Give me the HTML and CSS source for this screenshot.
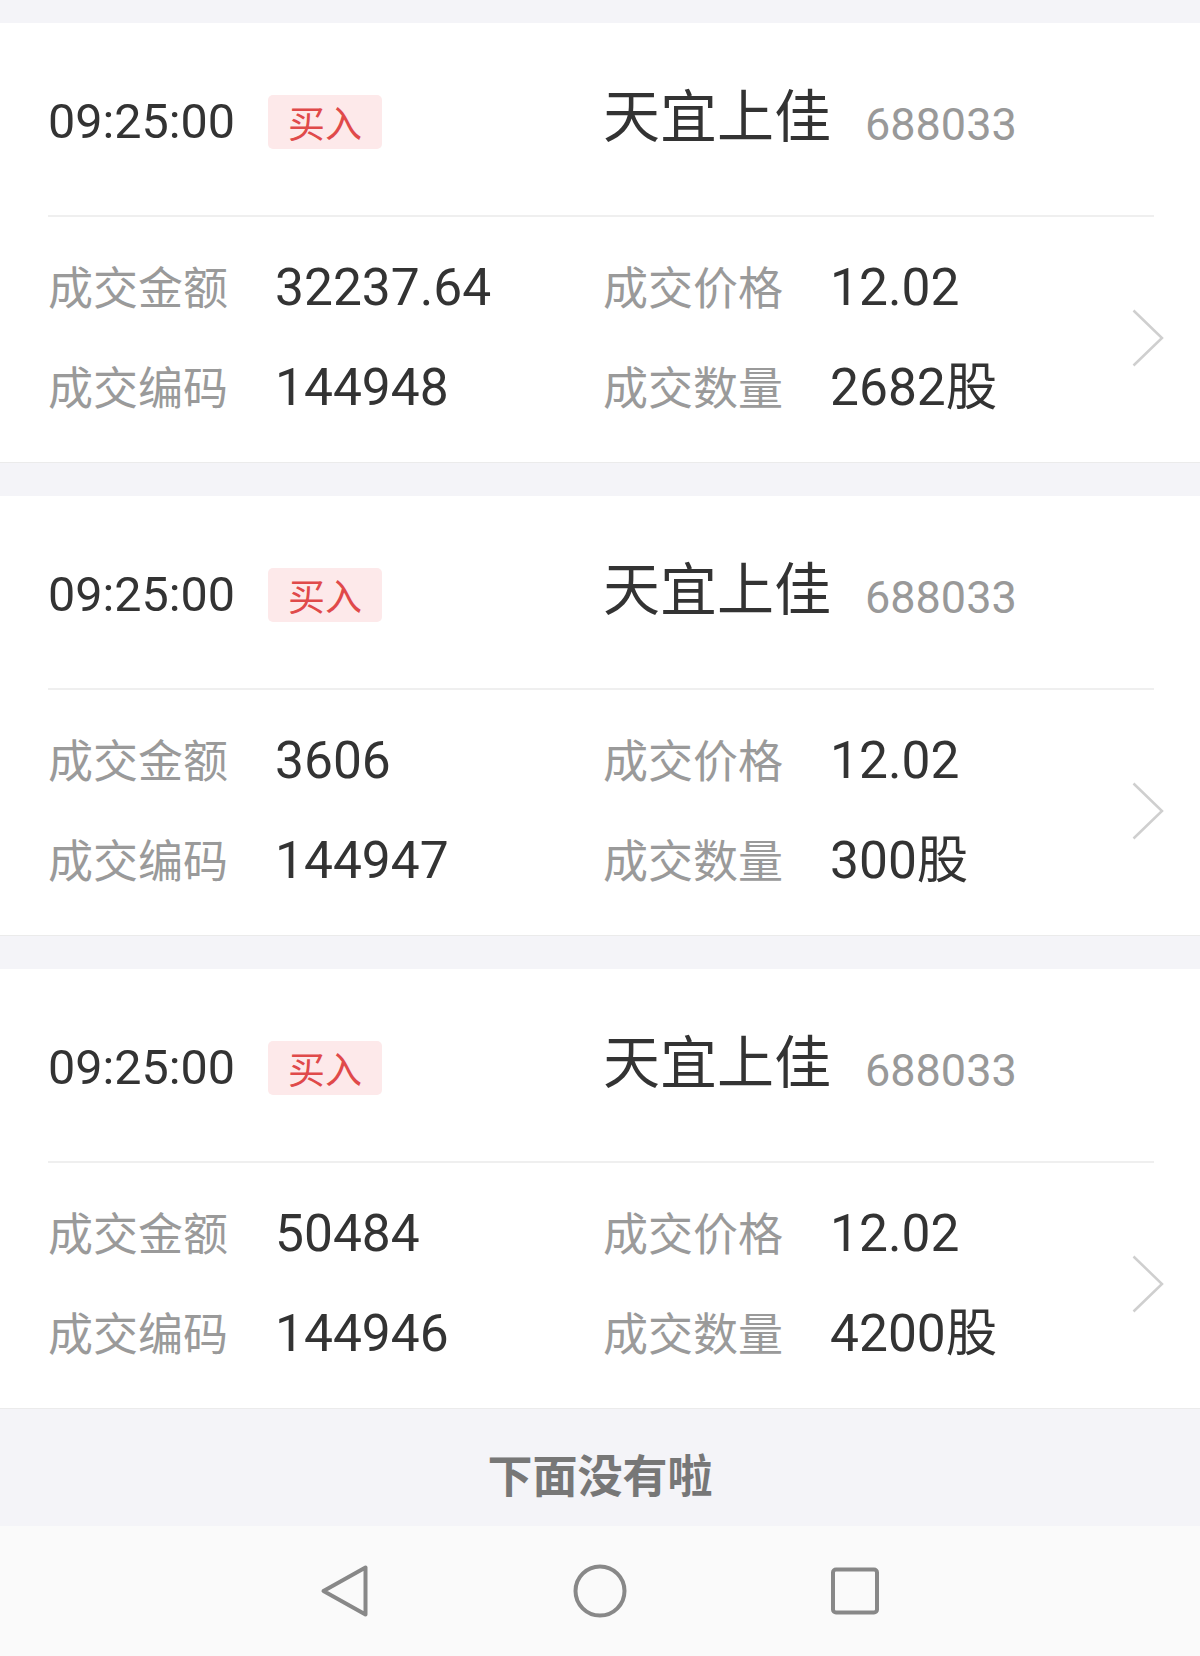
FILE: index.html
```html
<!DOCTYPE html>
<html lang="zh-CN">
<head>
  <meta charset="utf-8">
  <meta name="viewport" content="width=device-width, initial-scale=1.0">
  <title>成交明细</title>
  <link rel="stylesheet" href="styles.css">
</head>

<body>
  <div class="list">

    <div class="card">
      <div class="head">
        <div class="head-left">
          <span class="time">09:25:00</span>
          <span class="badge">买入</span>
        </div>
        <div class="head-right">
          <span class="name">天宜上佳</span><span class="code">688033</span>
        </div>
      </div>
      <div class="details">
        <div class="col col-left">
          <div class="row"><span class="label">成交金额</span><span class="value">32237.64</span></div>
          <div class="row"><span class="label">成交编码</span><span class="value">144948</span></div>
        </div>
        <div class="col">
          <div class="row"><span class="label">成交价格</span><span class="value">12.02</span></div>
          <div class="row"><span class="label">成交数量</span><span class="value">2682股</span></div>
        </div>
        <svg class="chevron" width="32" height="58" viewBox="0 0 32 58"><polyline points="1.5,1.5 30,29 1.5,56.5"/></svg>
      </div>
    </div>

    <div class="card">
      <div class="head">
        <div class="head-left">
          <span class="time">09:25:00</span>
          <span class="badge">买入</span>
        </div>
        <div class="head-right">
          <span class="name">天宜上佳</span><span class="code">688033</span>
        </div>
      </div>
      <div class="details">
        <div class="col col-left">
          <div class="row"><span class="label">成交金额</span><span class="value">3606</span></div>
          <div class="row"><span class="label">成交编码</span><span class="value">144947</span></div>
        </div>
        <div class="col">
          <div class="row"><span class="label">成交价格</span><span class="value">12.02</span></div>
          <div class="row"><span class="label">成交数量</span><span class="value">300股</span></div>
        </div>
        <svg class="chevron" width="32" height="58" viewBox="0 0 32 58"><polyline points="1.5,1.5 30,29 1.5,56.5"/></svg>
      </div>
    </div>

    <div class="card">
      <div class="head">
        <div class="head-left">
          <span class="time">09:25:00</span>
          <span class="badge">买入</span>
        </div>
        <div class="head-right">
          <span class="name">天宜上佳</span><span class="code">688033</span>
        </div>
      </div>
      <div class="details">
        <div class="col col-left">
          <div class="row"><span class="label">成交金额</span><span class="value">50484</span></div>
          <div class="row"><span class="label">成交编码</span><span class="value">144946</span></div>
        </div>
        <div class="col">
          <div class="row"><span class="label">成交价格</span><span class="value">12.02</span></div>
          <div class="row"><span class="label">成交数量</span><span class="value">4200股</span></div>
        </div>
        <svg class="chevron" width="32" height="58" viewBox="0 0 32 58"><polyline points="1.5,1.5 30,29 1.5,56.5"/></svg>
      </div>
    </div>

  </div>

  <div class="end">下面没有啦</div>

  <!-- android nav bar -->
  <nav class="navbar">
    <svg width="56" height="56" viewBox="0 0 56 56"><polygon points="6.5,28 48.5,4.5 48.5,51.5"/></svg>
    <svg width="56" height="56" viewBox="0 0 56 56"><circle cx="28" cy="28" r="24.5"/></svg>
    <svg width="56" height="56" viewBox="0 0 56 56"><rect x="6" y="6.5" width="44" height="43" rx="3"/></svg>
  </nav>
</body>
</html>
```

FILE: styles.css
```css
:root {
  font-family: Roboto, "Noto Sans CJK SC", sans-serif;
  color: #333;
}

body {
  margin: 0;
  padding: 0;
  background: #f4f4f8;
}

.list {
  padding-top: 23px;
  display: flex;
  flex-direction: column;
  gap: 33px;
}

.card {
  height: 440px;
  box-sizing: border-box;
  padding-left: 48px;
  background: #fff;
  border-bottom: 1px solid #ebebeb;
}

.head {
  height: 194px;
  box-sizing: border-box;
  padding-top: 6px;
  margin-right: 46px;
  display: flex;
  align-items: center;
  border-bottom: 2px solid #efefef;
}

.head-left {
  width: 555px;
  display: flex;
  align-items: center;
  gap: 33px;
}

.time {
  font-size: 48.5px;
  line-height: 1;
  color: #333;
}

.badge {
  height: 54px;
  padding: 0 20px;
  display: flex;
  align-items: center;
  font-size: 37px;
  color: #e04a4a;
  background: #fde9ea;
  border-radius: 5px;
}

.head-right {
  padding-bottom: 8px;
  line-height: 1;
  white-space: nowrap;
}

.name {
  font-size: 57px;
  color: #333;
}

.code {
  margin-left: 34px;
  font-size: 45px;
  color: #999;
  vertical-align: -3px;
}

.details {
  height: 245px;
  box-sizing: border-box;
  padding: 21px 0 24px;
  display: flex;
  align-items: center;
}

.col-left {
  width: 555px;
}

.row {
  height: 100px;
  display: flex;
  align-items: baseline;
  line-height: 100px;
}

.label {
  width: 227px;
  font-size: 45px;
  color: #9a9a9a;
}

.value {
  font-size: 51.5px;
  color: #333;
}

.chevron {
  margin-left: auto;
  margin-right: 36px;
}

.chevron polyline {
  fill: none;
  stroke: #cfcfcf;
  stroke-width: 2.5;
}

.end {
  height: 117px;
  box-sizing: border-box;
  padding-top: 12px;
  display: flex;
  align-items: center;
  justify-content: center;
  font-size: 45px;
  font-weight: bold;
  color: #777;
}

.navbar {
  height: 130px;
  background: #fafafa;
  display: flex;
  align-items: center;
  justify-content: center;
  gap: 199px;
}

.navbar svg * {
  fill: none;
  stroke: #888;
  stroke-width: 4;
  stroke-linejoin: round;
}
```
